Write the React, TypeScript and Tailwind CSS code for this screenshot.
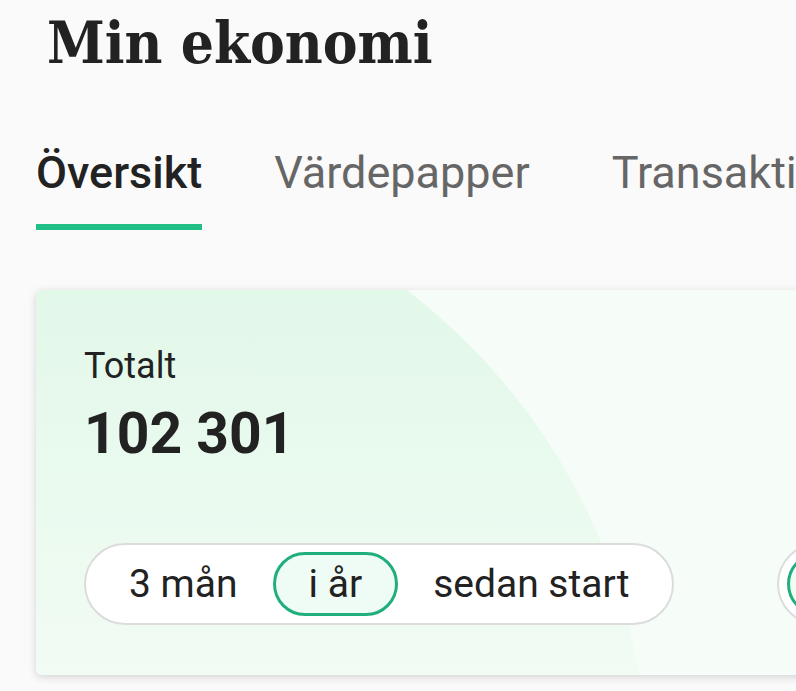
import React from "react";

const tabs = ["Översikt", "Värdepapper", "Transaktioner"];
const tabGaps = ["", "ml-[72px]", "ml-[82px]"];
const periods = ["3 mån", "i år", "sedan start"];

function Pill({ items, active }: { items: string[]; active: number }) {
	return (
		<div className="flex h-[82px] shrink-0 items-center rounded-full border-2 border-[#dcdcdc] bg-white px-[8px]">
			{items.map((item, i) => (
				<div
					key={item}
					className={
						i === active
							? "flex h-[64px] items-center rounded-full border-[3px] border-[#1fae7c] bg-[#effbf5] px-[33px]"
							: "flex h-[64px] items-center px-[35px]"
					}
				>
					{item}
				</div>
			))}
		</div>
	);
}

export default function App() {
	return (
		<div className="h-[691px] w-[796px] overflow-hidden bg-[#fafafa] font-['Roboto',sans-serif] text-[#222]">
			<h1 className="pl-[47px] pt-[8px] font-['DejaVu_Serif',serif] text-[58px] font-bold leading-[70px] text-[#222] font-stretch-condensed">
				Min ekonomi
			</h1>

			<div className="mt-[69px] flex whitespace-nowrap pl-[36px] text-[45px] leading-[52px]">
				{tabs.map((tab, i) => (
					<div key={tab} className={`flex flex-col ${tabGaps[i]}`}>
						<span className={i === 0 ? "font-medium text-[#222]" : "text-[#666]"}>{tab}</span>
						{i === 0 && <div className="mt-[25px] h-[6px] bg-[#1fbf85]" />}
					</div>
				))}
			</div>

			<div className="relative ml-[36px] mt-[60px] h-[385px] w-[800px] overflow-hidden rounded-[6px] bg-[#f6fdf8] shadow-[0_2px_8px_rgba(0,0,0,0.16)]">
				<div className="absolute left-[-612px] top-[-125px] h-[1224px] w-[1224px] rounded-full bg-linear-to-b from-[#e2f8e9] from-10% to-[#f3fcf5] to-45%" />
				<div className="relative flex flex-col pl-[48px] pt-[54px]">
					<div className="text-[36px] leading-[44px]">Totalt</div>
					<div className="mt-[13px] text-[57px] font-bold leading-[66px]">102 301</div>
					<div className="mt-[76px] flex gap-[103px] text-[39px]">
						<Pill items={periods} active={1} />
						<Pill items={["kr", "%"]} active={0} />
					</div>
				</div>
			</div>
		</div>
	);
}
